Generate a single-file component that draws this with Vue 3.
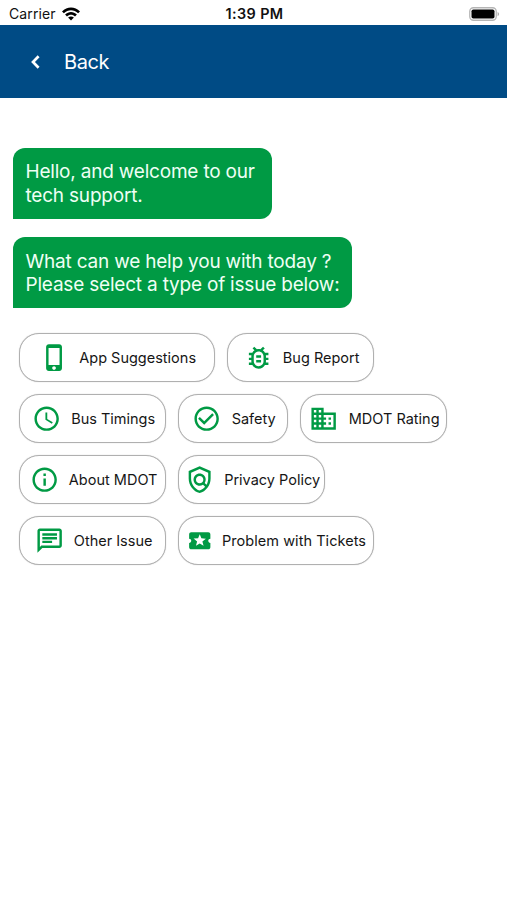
<script setup>
const messages = [
  ['Hello, and welcome to our', 'tech support.'],
  ['What can we help you with today ?', 'Please select a type of issue below:'],
]

const rows = [
  [
    { label: 'App Suggestions', size: 'large', icon: 'M15.7 1h-8.4C6 1 5 2 5 3.3v17.4C5 22 6 23 7.3 23h8.4c1.3 0 2.3-1 2.3-2.3V3.3C18 2 17 1 15.7 1zm-4.2 21c-.83 0-1.5-.67-1.5-1.5s.67-1.5 1.5-1.5 1.5.67 1.5 1.5-.67 1.5-1.5 1.5zm4.5-4H7V4h9v14z' },
    { label: 'Bug Report', size: 'medium', icon: 'M20 8h-2.81c-.45-.78-1.07-1.45-1.82-1.96L17 4.41 15.59 3l-2.17 2.17C12.96 5.06 12.49 5 12 5s-.96.06-1.41.17L8.41 3 7 4.41l1.62 1.63C7.88 6.55 7.26 7.22 6.81 8H4v2h2.09c-.05.33-.09.66-.09 1v1H4v2h2v1c0 .34.04.67.09 1H4v2h2.81c1.04 1.79 2.97 3 5.19 3s4.15-1.21 5.19-3H20v-2h-2.09c.05-.33.09-.66.09-1v-1h2v-2h-2v-1c0-.34-.04-.67-.09-1H20V8zm-4 7c0 2.21-1.79 4-4 4s-4-1.79-4-4v-4c0-2.21 1.79-4 4-4s4 1.79 4 4v4zm-6-1h4v2h-4zm0-4h4v2h-4z' },
  ],
  [
    { label: 'Bus Timings', size: 'medium', icon: 'M11.99 2C6.47 2 2 6.48 2 12s4.47 10 9.99 10C17.52 22 22 17.52 22 12S17.52 2 11.99 2zM12 20c-4.42 0-8-3.58-8-8s3.58-8 8-8 8 3.58 8 8-3.58 8-8 8zm.5-13H11v6l5.25 3.15.75-1.23-4.5-2.67z' },
    { label: 'Safety', size: 'small', icon: 'M16.59 7.58 10 14.17l-3.59-3.58L5 12l5 5 8-8zM12 2C6.48 2 2 6.48 2 12s4.48 10 10 10 10-4.48 10-10S17.52 2 12 2zm0 18c-4.42 0-8-3.58-8-8s3.58-8 8-8 8 3.58 8 8-3.58 8-8 8z' },
    { label: 'MDOT Rating', size: 'medium', icon: 'M12 7V3H2v18h20V7H12zM6 19H4v-2h2v2zm0-4H4v-2h2v2zm0-4H4V9h2v2zm0-4H4V5h2v2zm4 12H8v-2h2v2zm0-4H8v-2h2v2zm0-4H8V9h2v2zm0-4H8V5h2v2zm10 12h-8v-2h2v-2h-2v-2h2v-2h-2V9h8v10zm-2-8h-2v2h2v-2zm0 4h-2v2h2v-2z' },
  ],
  [
    { label: 'About MDOT', size: 'medium', icon: 'M11 7h2v2h-2zm0 4h2v6h-2zm1-9C6.48 2 2 6.48 2 12s4.48 10 10 10 10-4.48 10-10S17.52 2 12 2zm0 18c-4.41 0-8-3.59-8-8s3.59-8 8-8 8 3.59 8 8-3.59 8-8 8z' },
    { label: 'Privacy Policy', size: 'medium', icon: 'M12 1 3 5v6c0 5.55 3.84 10.74 9 12 5.16-1.26 9-6.45 9-12V5l-9-4zm7 10c0 1.85-.51 3.65-1.38 5.21l-1.45-1.45c1.29-1.94 1.07-4.58-.64-6.29-1.95-1.95-5.12-1.95-7.07 0-1.95 1.95-1.95 5.12 0 7.07 1.71 1.71 4.35 1.92 6.29.64l1.72 1.72c-1.19 1.42-2.73 2.51-4.47 3.04-4.02-1.25-7-5.42-7-9.94V6.3l7-3.11 7 3.11V11zm-7 4c-1.66 0-3-1.34-3-3s1.34-3 3-3 3 1.34 3 3-1.34 3-3 3z' },
  ],
  [
    { label: 'Other Issue', size: 'medium', icon: 'M4 4h16v12H5.17L4 17.17V4m0-2c-1.1 0-1.99.9-1.99 2L2 22l4-4h14c1.1 0 2-.9 2-2V4c0-1.1-.9-2-2-2H4zm2 10h8v2H6v-2zm0-3h12v2H6V9zm0-3h12v2H6V6z' },
    { label: 'Problem with Tickets', size: 'large', compact: true, icon: 'M20 12c0-1.1.9-2 2-2V6c0-1.1-.9-2-2-2H4c-1.1 0-1.99.9-1.99 2v4c1.1 0 1.99.9 1.99 2s-.89 2-2 2v4c0 1.1.9 2 2 2h16c1.1 0 2-.9 2-2v-4c-1.1 0-2-.9-2-2zm-4.42 4.8L12 14.5l-3.58 2.3 1.08-4.12-3.29-2.69 4.24-.25L12 5.8l1.54 3.95 4.24.25-3.29 2.69 1.09 4.11z' },
  ],
]
</script>

<template>
  <div class="screen">
    <header>
      <div class="status">
        <div class="carrier">
          <span>Carrier</span>
          <svg class="wifi" viewBox="0 0 18 14">
            <path d="M0 4.4C5-.9 13-.9 18 4.4L16.1 6.3C12.1 2.2 5.9 2.2 1.9 6.3Z" />
            <path d="M3.1 7.5c3.4-3.4 8.4-3.4 11.8 0L13 9.4c-2.3-2.2-5.7-2.2-8 0Z" />
            <path d="M6.1 10.6c1.8-1.5 4-1.5 5.8 0L9 13.5Z" />
          </svg>
        </div>
        <time>1:39 PM</time>
        <div class="power">
          <svg class="battery" viewBox="0 0 31 14">
            <rect x=".75" y=".75" width="26.5" height="12.5" rx="3.7" fill="#fff" stroke="#b5b5b5" stroke-width="1.3" />
            <rect x="2.5" y="2.5" width="23" height="9" rx="1.8" />
            <path d="M28.6 4.7q3 2.3 0 4.6z" fill="#aaa" />
          </svg>
        </div>
      </div>
      <nav class="bar">
        <svg class="chevron" viewBox="0 0 10 14">
          <path d="M8.6 1.3 3 7l5.6 5.7" fill="none" stroke="#fff" stroke-width="2.7" />
        </svg>
        <span>Back</span>
      </nav>
    </header>
    <main>
      <section class="messages">
        <p v-for="(lines, i) in messages" :key="i" class="bubble">
          <span v-for="line in lines" :key="line">{{ line }}</span>
        </p>
      </section>
      <section class="topics">
        <div v-for="(row, i) in rows" :key="i" class="row">
          <button v-for="item in row" :key="item.label" class="chip" :class="[item.size, { compact: item.compact }]">
            <svg class="icon" viewBox="0 0 24 24"><path :d="item.icon" /></svg>
            <span>{{ item.label }}</span>
          </button>
        </div>
      </section>
    </main>
  </div>
</template>

<style>
body { margin: 0; background: #fff; }
</style>

<style scoped>
.screen {
  min-height: 900px;
  font-family: Inter, "Liberation Sans", sans-serif;
  background: #fff;
}
.status {
  box-sizing: border-box;
  display: grid;
  grid-template-columns: 1fr auto 1fr;
  align-items: center;
  height: 25.4px;
  padding: 2px 7px 0 9px;
  color: #111;
  font-size: 14px;
  line-height: 22px;
}
.carrier { display: flex; align-items: center; gap: 6px; letter-spacing: .1px; }
.wifi { width: 18px; height: 14px; }
time { font-weight: 600; font-size: 14.4px; letter-spacing: .4px; }
.power { display: flex; justify-content: flex-end; }
.battery { width: 31px; height: 14px; }
.bar {
  box-sizing: border-box;
  display: flex;
  align-items: center;
  gap: 24px;
  height: 73px;
  padding: 1px 0 0 30px;
  background: #004b85;
  color: #fff;
  font-size: 20px;
  letter-spacing: -.4px;
}
.chevron { width: 10px; height: 14px; }
main { padding: 49.2px 13px 0; }
.messages { display: flex; flex-direction: column; align-items: flex-start; gap: 18.5px; }
.bubble {
  box-sizing: border-box;
  display: flex;
  flex-direction: column;
  height: 71px;
  margin: 0;
  padding: 12.8px 12.5px 0;
  border-radius: 12px 12px 12px 0;
  background: #009a44;
  color: #effff4;
  font-size: 19px;
  letter-spacing: -.2px;
  line-height: 23.3px;
  white-space: nowrap;
}
.bubble:first-child { padding-right: 17.5px; }
.topics { display: flex; flex-direction: column; gap: 12px; padding: 24.9px 6px 0; }
.row { display: flex; gap: 12px; }
.chip {
  box-sizing: border-box;
  display: flex;
  align-items: center;
  justify-content: center;
  gap: 10px;
  height: 49px;
  padding: 0 0 0 2px;
  border: 1px solid #b0b0b0;
  border-radius: 20px;
  box-shadow: 0 0 1px #bbb;
  background: #fff;
  color: #161616;
  font: inherit;
  font-size: 14.5px;
  white-space: nowrap;
}
.small { width: 110px; }
.medium { width: 147px; }
.large { width: 196px; }
.icon { flex: none; width: 29.3px; height: 29.3px; fill: #009a44; }
.compact { gap: 7.5px; padding: 0 1px 0 0; letter-spacing: .05px; }
.compact .icon { width: 25.5px; height: 25.5px; margin: 0 2px; }
</style>
